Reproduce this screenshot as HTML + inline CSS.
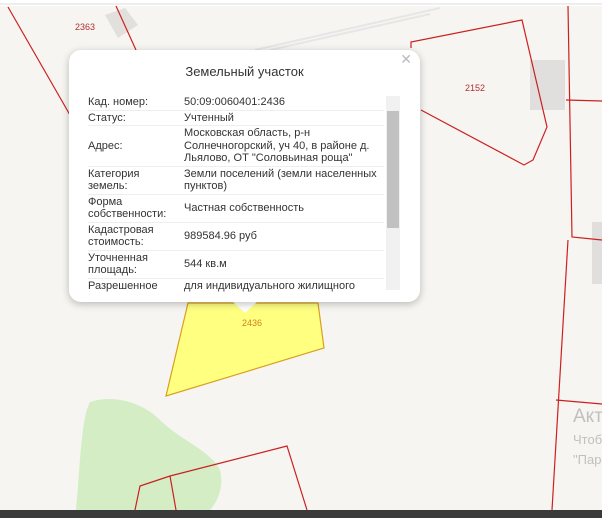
<!DOCTYPE html>
<html><head><meta charset="utf-8"><style>
body{margin:0;width:602px;height:518px;overflow:hidden;background:#f6f5f1;font-family:"Liberation Sans",sans-serif;position:relative}
svg{position:absolute;left:0;top:0}
.pop{position:absolute;left:69px;top:50px;width:351px;height:252px;background:#fff;border-radius:12px;box-shadow:0 2px 8px rgba(0,0,0,.25)}
.title{position:absolute;left:0;width:351px;top:14px;text-align:center;font-size:13px;color:#333}
.x{position:absolute;right:8px;top:1px;font-size:14px;color:#bbb}
table{position:absolute;left:19px;top:45px;width:296px;border-collapse:collapse;font-size:11px;color:#333;line-height:12.5px;table-layout:fixed}
td{border-bottom:1px solid #eee;padding:1px 0;vertical-align:middle}
.sb{position:absolute;left:317px;top:46px;width:14px;height:194px;background:#f1f1f1}
.th{position:absolute;left:1px;top:15px;width:12px;height:117px;background:#c1c1c1}
.tip{position:absolute;left:232px;top:301px;width:0;height:0;border-left:13px solid transparent;border-right:13px solid transparent;border-top:12px solid #fff}
.ghost{position:absolute;color:#c0c0c0;left:573px}
</style></head><body>
<svg width="602" height="518">
<rect x="0" y="0" width="602" height="6" fill="#fff"/>
<line x1="0" y1="4" x2="602" y2="4" stroke="#ddd"/>
<polygon points="105,15 125,8 138,25 118,38" fill="#e2e0dc"/>
<line x1="255" y1="50" x2="440" y2="8" stroke="#e6e6e6" stroke-width="2"/>
<line x1="270" y1="50" x2="430" y2="14" stroke="#e6e6e6" stroke-width="2"/>
<rect x="530" y="60" width="35" height="50" fill="#e0dfdd"/>
<rect x="592" y="222" width="10" height="62" fill="#e0dfdd"/>
<path d="M90,402 C110,395 140,400 160,420 C180,440 210,450 220,470 C225,490 215,510 200,518 L75,518 C80,480 80,420 90,402Z" fill="#d4edc4"/>
<polygon points="188,303 318,303 324,348 166,396" fill="#ffff80" stroke="#d9a020" stroke-width="1.2"/>
<g stroke="#cc2020" stroke-width="1.2" fill="none">
<line x1="8" y1="7" x2="70" y2="115"/>
<line x1="116" y1="6" x2="136" y2="50"/>
<polyline points="411,48 411,42 522,20 547,127 533,160 524,165 421,110"/>
<polyline points="568,6 572,237 602,240"/>
<line x1="566" y1="100" x2="602" y2="101"/>
<polyline points="568,240 552,510"/>
<line x1="556" y1="400" x2="602" y2="404"/>
<polyline points="135,510 140,486 170,476 287,446 307,510"/>
<line x1="170" y1="476" x2="176" y2="510"/>
</g>
<text x="75" y="30" font-size="9" fill="#b03030" font-family="Liberation Sans">2363</text>
<text x="465" y="91" font-size="9" fill="#b03030" font-family="Liberation Sans">2152</text>
<text x="242" y="326" font-size="9" fill="#d08020" font-family="Liberation Sans">2436</text>
<rect x="0" y="510" width="602" height="8" fill="#3a3a3a"/>
</svg>
<div class="ghost" style="top:406px;font-size:19px">Акт</div>
<div class="ghost" style="top:432px;font-size:13px">Чтоб</div>
<div class="ghost" style="top:452px;font-size:13px">"Пар</div>
<div class="tip"></div>
<div class="pop">
<div class="title">Земельный участок</div>
<div class="x">✕</div>
<table>
<colgroup><col style="width:96px"><col></colgroup>
<tr><td>Кад. номер:</td><td>50:09:0060401:2436</td></tr>
<tr><td>Статус:</td><td>Учтенный</td></tr>
<tr><td>Адрес:</td><td>Московская область, р-н Солнечногорский, уч 40, в районе д. Льялово, ОТ "Соловьиная роща"</td></tr>
<tr><td>Категория<br>земель:</td><td>Земли поселений (земли населенных пунктов)</td></tr>
<tr><td>Форма собственности:</td><td>Частная собственность</td></tr>
<tr><td>Кадастровая стоимость:</td><td>989584.96 руб</td></tr>
<tr><td>Уточненная площадь:</td><td>544 кв.м</td></tr>
<tr><td style="border:0">Разрешенное</td><td style="border:0">для индивидуального жилищного</td></tr>
</table>
<div class="sb"><div class="th"></div></div>
</div>
</body></html>
